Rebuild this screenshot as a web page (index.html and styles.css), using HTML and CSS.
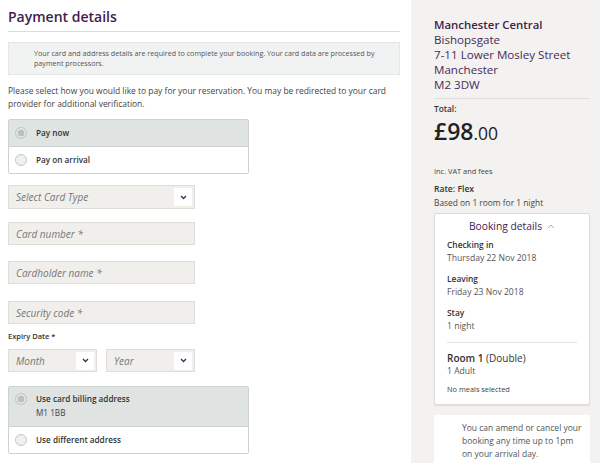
FILE: index.html
```html
<!DOCTYPE html>
<html>
<head>
<meta charset="utf-8">
<link rel="stylesheet" href="styles.css">
</head>
<body>
<div class="page">
  <main class="main">
    <h1 class="title">Payment details</h1>
    <div class="notice">Your card and address details are required to complete your booking. Your card data are processed by payment processors.</div>
    <p class="intro">Please select how you would like to pay for your reservation. You may be redirected to your card provider for additional verification.</p>

    <div class="radio-group">
      <div class="radio-row selected"><span class="radio"></span><span class="radio-label">Pay now</span></div>
      <div class="radio-row"><span class="radio"></span><span class="radio-label">Pay on arrival</span></div>
    </div>

    <div class="field select card-type"><span class="ph">Select Card Type</span><span class="chev"><svg width="7" height="5" viewBox="0 0 7 5"><path d="M1 1 L3.5 3.5 L6 1" fill="none" stroke="#4a2060" stroke-width="1.3"/></svg></span></div>
    <div class="field input f1"><span class="ph">Card number *</span></div>
    <div class="field input f2"><span class="ph">Cardholder name *</span></div>
    <div class="field input f3"><span class="ph">Security code *</span></div>

    <div class="label">Expiry Date *</div>
    <div class="expiry">
      <div class="field select small"><span class="ph">Month</span><span class="chev"><svg width="7" height="5" viewBox="0 0 7 5"><path d="M1 1 L3.5 3.5 L6 1" fill="none" stroke="#4a2060" stroke-width="1.3"/></svg></span></div>
      <div class="field select small"><span class="ph">Year</span><span class="chev"><svg width="7" height="5" viewBox="0 0 7 5"><path d="M1 1 L3.5 3.5 L6 1" fill="none" stroke="#4a2060" stroke-width="1.3"/></svg></span></div>
    </div>

    <div class="radio-group address">
      <div class="radio-row selected tall"><span class="radio"></span><span class="radio-label">Use card billing address<span class="sub">M1 1BB</span></span></div>
      <div class="radio-row"><span class="radio"></span><span class="radio-label">Use different address</span></div>
    </div>
  </main>

  <aside class="side">
    <div class="hotel">
      <div class="hotel-name">Manchester Central</div>
      <div>Bishopsgate</div>
      <div>7-11 Lower Mosley Street</div>
      <div>Manchester</div>
      <div>M2 3DW</div>
    </div>
    <div class="total-label">Total:</div>
    <div class="price"><span class="big">£98</span><span class="cents">.00</span></div>
    <div class="vat">Inc. VAT and fees</div>
    <div class="rate">Rate: Flex</div>
    <div class="based">Based on 1 room for 1 night</div>

    <div class="card">
      <div class="card-head">Booking details <svg width="8" height="5" viewBox="0 0 8 5"><path d="M1 4 L4 1 L7 4" fill="none" stroke="#b9a8bd" stroke-width="1"/></svg></div>
      <div class="item"><div class="k">Checking in</div><div class="v">Thursday 22 Nov 2018</div></div>
      <div class="item"><div class="k">Leaving</div><div class="v">Friday 23 Nov 2018</div></div>
      <div class="item"><div class="k">Stay</div><div class="v">1 night</div></div>
      <div class="room">
        <div class="room-name"><b>Room 1</b> (Double)</div>
        <div class="v adult">1 Adult</div>
        <div class="meals">No meals selected</div>
      </div>
    </div>

    <div class="amend">You can amend or cancel your booking any time up to 1pm on your arrival day.</div>
  </aside>
</div>
</body>
</html>
```

FILE: styles.css
```css
html, body {
  margin: 0;
  padding: 0;
  background: #fff;
  font-family: "Open Sans", "Noto Sans", sans-serif;
  color: #444;
}
.page {
  display: flex;
  width: 600px;
  height: 463px;
  overflow: hidden;
}
.main {
  width: 392px;
  flex: none;
  padding-left: 8px;
}
.title {
  margin: 0;
  padding-top: 7px;
  height: 24px;
  font-size: 14px;
  line-height: 20px;
  font-weight: 600;
  color: #3f1d4c;
  border-bottom: 1px solid #dcdcdc;
}
.notice {
  margin-top: 10px;
  height: 26px;
  padding: 5px 8px 0 25px;
  background: #f1f2f2;
  border: 1px solid #e4e6e6;
  font-size: 7.15px;
  line-height: 10px;
  color: #555;
}
.intro {
  margin: 9px 0 0;
  font-size: 8.45px;
  line-height: 13px;
  color: #444;
}
.radio-group {
  margin-top: 9px;
  width: 239px;
  border: 1px solid #ccd2d0;
  border-radius: 2px;
  overflow: hidden;
}
.radio-row {
  display: flex;
  align-items: center;
  height: 26px;
  padding-left: 6px;
  background: #fff;
}
.radio-row + .radio-row {
  border-top: 1px solid #ccd2d0;
}
.radio-row.selected {
  background: #dfe3e2;
}
.radio-row.tall {
  height: 39px;
  align-items: flex-start;
  padding-top: 6px;
  box-sizing: border-box;
}
.radio {
  width: 12px;
  height: 12px;
  box-sizing: border-box;
  border-radius: 50%;
  border: 1px solid #c4c9c8;
  background: #f0f0ee;
  flex: none;
}
.selected .radio {
  background: #b8c2bf;
  box-shadow: inset 0 0 0 1.5px #e9eceb;
}
.radio-label {
  margin-left: 9px;
  font-size: 8.2px;
  font-weight: 600;
  color: #333;
  line-height: 12px;
}
.sub {
  display: block;
  font-weight: 400;
  margin-top: 2px;
  color: #444;
}
.field {
  display: flex;
  align-items: center;
  box-sizing: border-box;
  width: 187px;
  height: 24px;
  background: #f0efec;
  border: 1px solid #e0ddd8;
  padding-left: 7px;
}
.ph {
  font-size: 10px;
  font-style: italic;
  color: #777;
}
.select {
  justify-content: space-between;
  padding-right: 2px;
}
.chev {
  width: 18px;
  height: 18px;
  background: #fff;
  display: flex;
  align-items: center;
  justify-content: center;
}
.card-type { margin-top: 11px; }
.input { height: 23px; }
.f1 { margin-top: 13px; }
.f2 { margin-top: 16px; }
.f3 { margin-top: 17px; }
.label {
  margin-top: 6px;
  font-size: 7.5px;
  font-weight: 600;
  line-height: 12px;
  color: #333;
}
.expiry {
  display: flex;
  gap: 9px;
  margin-top: 7px;
}
.field.small {
  width: 89px;
  height: 23px;
}
.address {
  margin-top: 14px;
}

.side {
  margin-left: 11px;
  width: 189px;
  flex: none;
  background: #f3f2f0;
  padding: 17px 10px 0 23px;
  box-sizing: border-box;
  font-size: 8px;
  color: #444;
}
.hotel {
  font-size: 11.6px;
  line-height: 15px;
  color: #4a2a5a;
  padding-bottom: 6px;
  border-bottom: 1px solid #e2e0dd;
  white-space: nowrap;
}
.hotel-name {
  font-weight: 600;
  font-size: 11.4px;
  color: #3f1d4c;
}
.total-label {
  margin-top: 5px;
  font-size: 8.3px;
  font-weight: 600;
  line-height: 10px;
  color: #333;
}
.price {
  margin-top: 5px;
  color: #222;
  line-height: 24px;
  height: 24px;
  white-space: nowrap;
}
.price .big {
  font-size: 23px;
  font-weight: 600;
}
.price .cents {
  font-size: 17.5px;
}
.vat {
  margin-top: 23px;
  font-size: 7.4px;
  line-height: 10px;
  color: #444;
}
.rate {
  margin-top: 7px;
  font-size: 8.6px;
  font-weight: 600;
  line-height: 13px;
  color: #333;
}
.based {
  font-size: 8.4px;
  line-height: 13px;
}
.card {
  margin-top: 4px;
  background: #fff;
  border: 1px solid #dddbd8;
  border-radius: 2px;
  box-shadow: 0 1px 1px rgba(0,0,0,0.08);
  padding: 5px 12px 10px 12px;
  height: 192px;
  box-sizing: border-box;
}
.card-head {
  text-align: center;
  font-size: 10.3px;
  line-height: 14px;
  color: #3f1d4c;
  display: flex;
  justify-content: center;
  align-items: center;
  gap: 5px;
}
.item {
  margin-top: 5px;
}
.item + .item { margin-top: 7px; }
.k {
  font-size: 8.4px;
  font-weight: 600;
  line-height: 14px;
  color: #333;
}
.v {
  font-size: 8.6px;
  line-height: 13px;
  color: #555;
}
.room {
  margin-top: 9px;
  border-top: 1px solid #e6e4e1;
  padding-top: 9px;
}
.room-name {
  font-size: 10px;
  line-height: 13px;
  color: #333;
}
.room-name b { font-weight: 600; }
.adult { line-height: 12px; }
.meals {
  margin-top: 7px;
  font-size: 7.4px;
  line-height: 10px;
  color: #444;
}
.amend {
  margin-top: 10px;
  background: #fff;
  padding: 6px 6px 10px 28px;
  font-size: 8.5px;
  line-height: 13px;
  color: #555;
}
```
